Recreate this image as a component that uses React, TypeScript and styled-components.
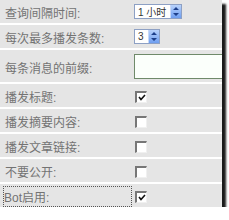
import React from "react";
import styled, { createGlobalStyle } from "styled-components";

const Global = createGlobalStyle`
  html, body {
    margin: 0;
    padding: 0;
    background: #ffffff;
  }
  body {
    font-family: "Liberation Sans", "Noto Sans CJK SC", sans-serif;
  }
`;

const Panel = styled.div`
  width: 222px;
  background: #ffffff;
  display: flex;
  flex-direction: column;
  gap: 2px;
  box-shadow: 4px 4px 2px #1a1a1a;
`;

const Row = styled.div<{ $tall?: boolean }>`
  height: ${(p) => (p.$tall ? 32 : 23)}px;
  background: #e5e5e5;
  display: grid;
  grid-template-columns: 134px 1fr;
  align-items: center;
`;

const Label = styled.div<{ $focus?: boolean }>`
  height: 19px;
  margin: 2px 2px 0 3px;
  padding-left: ${(p) => (p.$focus ? 0 : 1)}px;
  display: flex;
  align-items: center;
  font-size: 12px;
  color: #737373;
  border: 1px dotted ${(p) => (p.$focus ? "#555" : "transparent")};
  white-space: nowrap;
`;

const Cell = styled.div`
  display: flex;
  align-items: center;
  height: 100%;
`;

const Select = styled.div<{ $w: number }>`
  width: ${(p) => p.$w}px;
  height: 15px;
  box-sizing: border-box;
  border: 1px solid #8da0c4;
  background: #ffffff;
  display: flex;
  align-items: center;
  justify-content: space-between;
  padding-left: 3px;
  font-size: 10px;
  color: #333;
`;

const Spin = styled.div`
  width: 10px;
  height: 13px;
  background: linear-gradient(#b8d2fb, #6e9ef0);
  border-left: 1px solid #c6d8f8;
  display: flex;
  align-items: center;
  justify-content: center;
`;

const TextBox = styled.div`
  width: 100%;
  height: 25px;
  box-sizing: border-box;
  border: 1px solid #6f8a6a;
  border-right: none;
  background: #fbfffb;
`;

const Box = styled.div`
  width: 12px;
  height: 12px;
  margin: 2px 0 0 1px;
  box-sizing: border-box;
  background: #ffffff;
  border-top: 2px solid #777;
  border-left: 2px solid #777;
  border-right: 1px solid #f0f0f0;
  border-bottom: 1px solid #f0f0f0;
  display: flex;
  align-items: center;
  justify-content: center;
`;

const Arrows = () => (
  <svg width="6" height="9" viewBox="0 0 6 9">
    <path d="M3 0 L6 3 H0 Z M3 9 L6 6 H0 Z" fill="#1d3f8a" />
  </svg>
);

const Check = () => (
  <svg width="8" height="7" viewBox="0 0 8 7">
    <path d="M1 3 L3 5.5 L7 1" stroke="#111" strokeWidth="1.6" fill="none" />
  </svg>
);

const Checkbox = ({ checked }: { checked?: boolean }) => (
  <Box>{checked && <Check />}</Box>
);

const rows: { label: string; checked: boolean; focus?: boolean }[] = [
  { label: "播发标题:", checked: true },
  { label: "播发摘要内容:", checked: false },
  { label: "播发文章链接:", checked: false },
  { label: "不要公开:", checked: false },
  { label: "Bot启用:", checked: true, focus: true },
];

export default function App() {
  return (
    <>
      <Global />
      <Panel>
        <Row>
          <Label>查询间隔时间:</Label>
          <Cell>
            <Select $w={48}>
              1 小时
              <Spin>
                <Arrows />
              </Spin>
            </Select>
          </Cell>
        </Row>
        <Row>
          <Label>每次最多播发条数:</Label>
          <Cell>
            <Select $w={26}>
              3
              <Spin>
                <Arrows />
              </Spin>
            </Select>
          </Cell>
        </Row>
        <Row $tall>
          <Label>每条消息的前缀:</Label>
          <Cell>
            <TextBox />
          </Cell>
        </Row>
        {rows.map((r) => (
          <Row key={r.label}>
            <Label $focus={r.focus}>{r.label}</Label>
            <Cell>
              <Checkbox checked={r.checked} />
            </Cell>
          </Row>
        ))}
      </Panel>
    </>
  );
}
